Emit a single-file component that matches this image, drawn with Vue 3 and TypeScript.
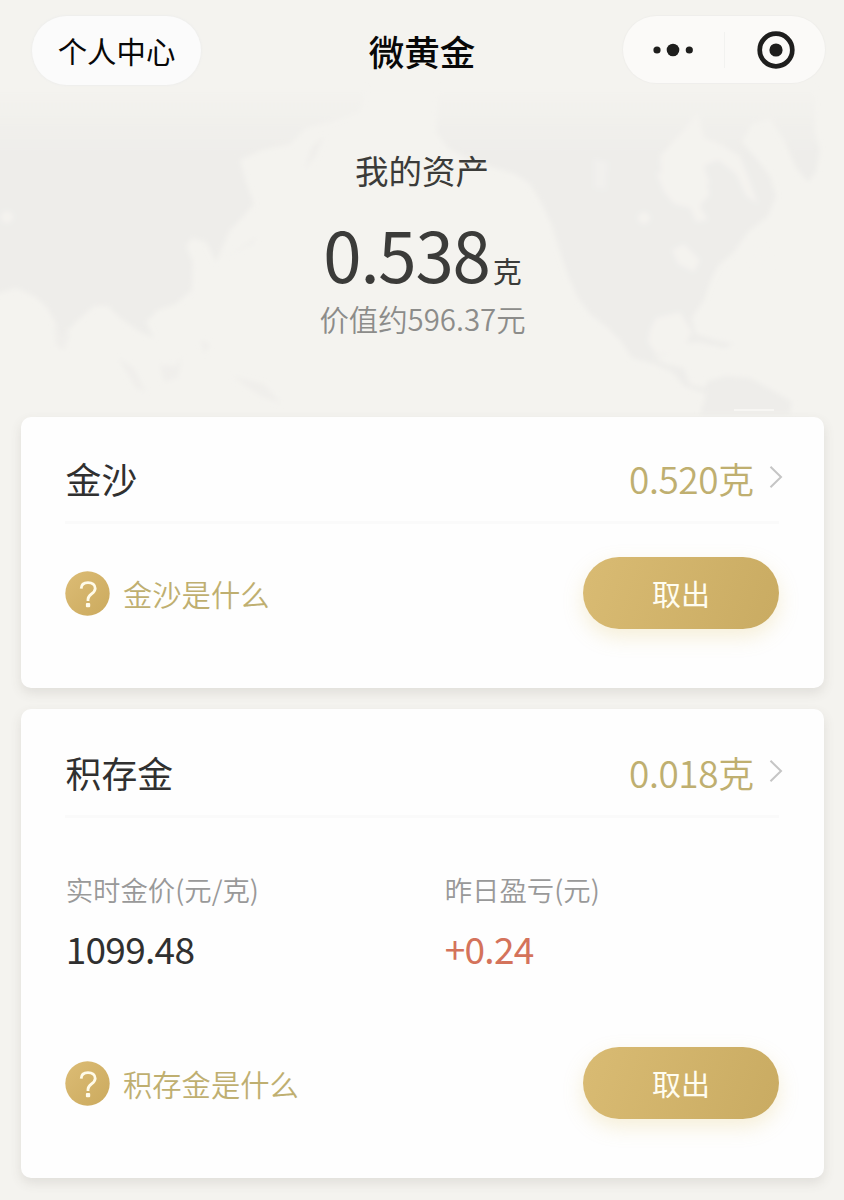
<script setup lang="ts">
interface Metric {
  label: string
  value: string
  rise?: boolean
}

interface Holding {
  id: string
  name: string
  amount: string
  help: string
  metrics: Metric[]
}

const holdings: Holding[] = [
  { id: 'sand', name: '金沙', amount: '0.520', help: '金沙是什么', metrics: [] },
  {
    id: 'saving',
    name: '积存金',
    amount: '0.018',
    help: '积存金是什么',
    metrics: [
      { label: '实时金价(元/克)', value: '1099.48' },
      { label: '昨日盈亏(元)', value: '+0.24', rise: true },
    ],
  },
]
</script>

<template>
  <div class="page">
    <svg class="map" viewBox="0 0 844 430" aria-hidden="true">
      <defs>
        <linearGradient id="seaFade" x1="0" y1="85" x2="0" y2="165" gradientUnits="userSpaceOnUse">
          <stop offset="0" stop-color="#eeedea" stop-opacity="0" />
          <stop offset="0.9" stop-color="#eeedea" />
        </linearGradient>
        <filter id="soft" x="-5%" y="-5%" width="110%" height="110%">
          <feGaussianBlur stdDeviation="2.6" />
        </filter>
      </defs>
      <g filter="url(#soft)">
        <path
          fill="url(#seaFade)"
          d="M-10 70H372L360 112L330 122L306 128L290 144L262 150L240 160L246 182L254 204L240 220L230 230L222 248L216 262L206 242L192 238L186 246L193 262L192 290L176 304L158 310L146 322L154 338L140 332L120 318L108 306L94 306L76 322L62 336L54 320L46 306L34 296L16 288L-10 296Z"
        />
        <path
          fill="url(#seaFade)"
          d="M440 70H815V132L820 150L816 172L808 182L796 168L784 140L770 118L752 124L742 142L756 158L770 176L776 196L768 216L748 232L734 252L718 266L710 282L704 300L692 318L696 334L716 340L734 344L724 348L698 342L680 344L670 354L654 357L666 364L684 368L690 384L704 388L708 381L726 376L750 378L772 390L792 402L790 414H700L706 394L684 386L672 372L654 364L632 358L620 340L608 328L590 314L578 298L568 276L560 252L552 226L542 204L530 184L515 174L495 168L470 160L448 148L436 132Z"
        />
        <path fill="#eeedea" d="M118 358L134 368L146 392L136 388ZM160 365L176 366L182 356L178 378L164 382ZM232 376L264 384L282 404L260 396ZM54 326L70 334L64 350L56 346ZM200 340L210 344L205 354ZM218 260L252 244L258 236L234 252ZM304 170L312 146L324 136L316 156Z" opacity=".7" />
        <g fill="#f4f3ef">
          <path d="M656 172L672 178L690 166L704 176L710 194L700 206L708 220L696 222L690 208L674 204L664 192Z" />
          <path d="M660 156L684 130L698 112L704 138L720 144L740 156L748 176L758 204L746 196L736 174L718 160L704 166L710 184L690 186L662 184Z" />
          <path d="M672 250L684 244L700 260L694 272L678 264ZM744 246L756 238L772 264L760 272ZM650 330L656 318L680 312L692 332L680 354L656 354L648 342Z" />
          <circle cx="644" cy="218" r="6" />
          <circle cx="7" cy="217" r="6" />
          <path opacity=".5" d="M594 158L608 162L606 190L594 188Z" />
        </g>
      </g>
      <path d="M734 410H774" stroke="#faf9f6" stroke-width="1.5" />
    </svg>

    <header class="nav">
      <button class="profile" type="button">个人中心</button>
      <h1 class="title">微黄金</h1>
      <div class="capsule">
        <svg class="more" viewBox="0 0 40 14">
          <circle cx="4" cy="7" r="3.6" />
          <circle cx="20" cy="7" r="6.3" />
          <circle cx="36.3" cy="7" r="3.6" />
        </svg>
        <span class="separator"></span>
        <svg class="close" viewBox="0 0 38 38">
          <circle cx="19" cy="19" r="16.3" fill="none" stroke="#1e1e1d" stroke-width="4.7" />
          <circle cx="19" cy="19" r="6.6" />
        </svg>
      </div>
    </header>

    <section class="assets">
      <h2 class="assets-label">我的资产</h2>
      <p class="assets-total">0.538<span class="unit">克</span></p>
      <p class="assets-value">价值约596.37元</p>
    </section>

    <main class="cards">
      <article v-for="item in holdings" :key="item.id" class="card" :class="item.id">
        <div class="card-head">
          <h3 class="name">{{ item.name }}</h3>
          <span class="amount">{{ item.amount }}<span class="gram">克</span></span>
          <svg class="chevron" viewBox="0 0 14 24">
            <path d="M1.5 1.8L12 12L1.5 22.2" />
          </svg>
        </div>
        <dl v-if="item.metrics.length" class="metrics">
          <div v-for="m in item.metrics" :key="m.label">
            <dt>{{ m.label }}</dt>
            <dd :class="{ rise: m.rise }">{{ m.value }}</dd>
          </div>
        </dl>
        <div class="card-foot">
          <svg class="question" viewBox="0 0 45 45">
            <defs>
              <linearGradient :id="'gold-' + item.id" x1="0" y1="0" x2="1" y2="1">
                <stop offset="0" stop-color="#dcbc75" />
                <stop offset="1" stop-color="#cbaa5e" />
              </linearGradient>
            </defs>
            <circle cx="22.5" cy="22.5" r="22.2" :fill="`url(#gold-${item.id})`" />
            <path d="M16.2 17.6C16.3 13.8 18.9 11.6 23 11.6C27.3 11.6 30.2 13.9 30.2 17.5C30.2 22.6 23 23.2 23 28.2V30" fill="none" stroke="#fffbe9" stroke-width="2.8" />
            <rect x="20.9" y="32" width="4.3" height="4.2" rx="1" fill="#fffbe9" />
          </svg>
          <span class="help">{{ item.help }}</span>
          <button class="withdraw" type="button">取出</button>
        </div>
      </article>
    </main>
  </div>
</template>

<style>
body {
  background: #f4f3ef;
}
</style>

<style scoped>
.page {
  position: relative;
  box-sizing: border-box;
  width: 844px;
  height: 1200px;
  overflow: hidden;
  background: #f4f3ef;
  color: #3b3b39;
  font-family: "Noto Sans CJK SC", sans-serif;
}

.page * {
  box-sizing: border-box;
}

h1, h2, h3, p, dl, dt, dd {
  margin: 0;
  font-weight: 400;
}

button {
  padding: 0;
  border: 0;
  font-family: inherit;
}

.map {
  position: absolute;
  top: 0;
  left: 0;
  width: 844px;
  height: 430px;
}

.nav {
  position: relative;
  display: grid;
  grid-template-columns: 1fr auto 1fr;
  align-items: start;
  height: 100px;
  padding: 16px 19px 0 32px;
}

.profile {
  width: 169px;
  height: 69px;
  border-radius: 35px;
  background: #fbfbfb;
  box-shadow: 0 0 2px 1px #eeeeec;
  color: #080808;
  font-size: 29.4px;
  line-height: 69px;
}

.title {
  margin-left: -13px;
  color: #080808;
  font-size: 35.6px;
  font-weight: 500;
  line-height: 70px;
}

.capsule {
  display: flex;
  align-items: center;
  justify-self: end;
  width: 202px;
  height: 67px;
  border-radius: 34px;
  background: #fbfaf8;
  box-shadow: 0 0 1px 1px #efeeeb;
  fill: #1e1e1d;
}

.more {
  width: 40px;
  height: 14px;
  margin-left: 30px;
}

.separator {
  width: 1px;
  height: 36px;
  margin-left: 31px;
  background: #f2f2f0;
}

.close {
  width: 38px;
  height: 38px;
  margin-left: 32px;
}

.assets {
  position: relative;
  display: flex;
  flex-direction: column;
  align-items: center;
  height: 317px;
  padding-top: 45px;
}

.assets-label {
  font-size: 33.5px;
  line-height: 50px;
}

.assets-total {
  height: 86px;
  margin-top: 15px;
  padding-left: 1px;
  font-size: 69px;
  letter-spacing: -1.2px;
  line-height: 86px;
}

.unit {
  margin-left: 3px;
  font-size: 29px;
  letter-spacing: 0;
}

.assets-value {
  padding-left: 1px;
  color: #8c8c8a;
  font-size: 29.4px;
  font-weight: 350;
  line-height: 44px;
}

.cards {
  position: relative;
  display: flex;
  flex-direction: column;
  gap: 21px;
  padding: 0 20px 0 21px;
}

.card {
  height: 469px;
  padding: 0 45px 0 44px;
  border-radius: 10px;
  background: #fefefe;
  box-shadow: 0 5px 12px rgba(80, 78, 68, 0.12);
}

.card.sand {
  height: 271px;
}

.card-head {
  display: flex;
  align-items: center;
  height: 107px;
  padding-top: 18px;
  border-bottom: 3px solid #fafafa;
}

.saving .card-head {
  height: 109px;
  padding-top: 20px;
}

.name {
  flex: 1;
  padding-left: 0.6px;
  color: #303030;
  font-size: 35.8px;
  line-height: 54px;
}

.amount {
  color: #bfaf70;
  font-size: 37px;
  font-weight: 350;
  letter-spacing: -0.4px;
  line-height: 54px;
}

.gram {
  font-size: 35.8px;
  letter-spacing: 0;
}

.chevron {
  width: 14px;
  height: 24px;
  margin: -3px -4px 0 15px;
  fill: none;
  stroke: #c5c5c5;
  stroke-width: 2;
}

.metrics {
  display: grid;
  grid-template-columns: 379px 1fr;
  height: 195px;
  padding: 51px 0 0 0.7px;
}

dt {
  color: #999;
  font-size: 27.4px;
  font-weight: 350;
  line-height: 40px;
}

dd {
  margin-top: 12px;
  color: #303030;
  font-size: 37px;
  letter-spacing: -0.7px;
  line-height: 54px;
}

dd.rise {
  color: #d4735b;
}

.card-foot {
  display: flex;
  align-items: center;
  height: 72px;
  margin-top: 34px;
}

.sand .card-foot {
  margin-top: 33px;
}

.question {
  width: 45px;
  height: 45px;
}

.help {
  flex: 1;
  margin-left: 13px;
  color: #bfaf70;
  font-size: 29.3px;
  font-weight: 350;
  line-height: 44px;
}

.withdraw {
  width: 196px;
  height: 72px;
  border-radius: 36px;
  background: linear-gradient(110deg, #d9bb73, #c9ab62);
  box-shadow: 0 8px 20px rgba(222, 195, 104, 0.25);
  color: #fffdf0;
  font-size: 29px;
  line-height: 72px;
}
</style>
